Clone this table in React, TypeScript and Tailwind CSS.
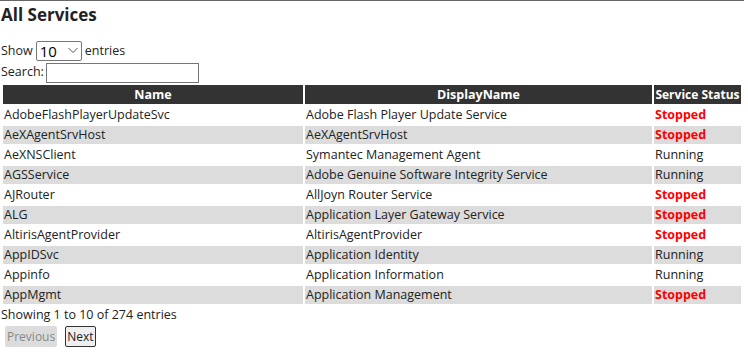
export default function App() {
  const rows = [
    ["AdobeFlashPlayerUpdateSvc", "Adobe Flash Player Update Service", "Stopped"],
    ["AeXAgentSrvHost", "AeXAgentSrvHost", "Stopped"],
    ["AeXNSClient", "Symantec Management Agent", "Running"],
    ["AGSService", "Adobe Genuine Software Integrity Service", "Running"],
    ["AJRouter", "AllJoyn Router Service", "Stopped"],
    ["ALG", "Application Layer Gateway Service", "Stopped"],
    ["AltirisAgentProvider", "AltirisAgentProvider", "Stopped"],
    ["AppIDSvc", "Application Identity", "Running"],
    ["Appinfo", "Application Information", "Running"],
    ["AppMgmt", "Application Management", "Stopped"],
  ]

  return (
    <div
      className="min-h-screen bg-white text-[12.5px] text-[#222] border-t border-[#666] w-[744px]"
      style={{ fontFamily: "'Open Sans', sans-serif" }}
    >
      <h1 className="text-[17px] font-bold leading-[24px] pt-[2px] pl-[1px] text-[#222]">All Services</h1>

      <div className="mt-[14px] flex items-center h-[21px] pl-[1px]">
        Show
        <div className="relative mx-[3px]">
          <select className="appearance-none w-[46px] h-[20px] border border-[#767676] rounded-[2px] text-[15px] leading-[18px] pl-[3px] bg-white text-black">
            <option>10</option>
          </select>
          <svg
            className="absolute right-[4px] top-[6px] pointer-events-none"
            width="10"
            height="7"
            viewBox="0 0 10 7"
            fill="none"
            stroke="#555"
            strokeWidth="1"
          >
            <path d="M0.5 1 L5 5.5 L9.5 1" />
          </svg>
        </div>
        entries
      </div>
      <div className="flex items-center h-[21px] pl-[1px]">
        Search:
        <input className="ml-[2px] w-[153px] h-[20px] border border-[#767676]" />
      </div>

      <table className="table-fixed border-separate border-spacing-[2px] w-[742px] ml-[1px]">
        <colgroup>
          <col className="w-[300px]" />
          <col className="w-[347px]" />
          <col />
        </colgroup>
        <thead>
          <tr className="bg-[#333] text-white font-bold">
            <th className="h-[19px] p-0 leading-[19px] whitespace-nowrap">Name</th>
            <th className="h-[19px] p-0 leading-[19px] whitespace-nowrap">DisplayName</th>
            <th className="h-[19px] p-0 leading-[19px] whitespace-nowrap text-[12px]">Service Status</th>
          </tr>
        </thead>
        <tbody>
          {rows.map((r, i) => (
            <tr key={r[0]} className={i % 2 === 1 ? "bg-[#dcdcdc]" : ""}>
              <td className="h-[18px] p-0 pl-[1px] leading-[18px] whitespace-nowrap">{r[0]}</td>
              <td className="h-[18px] p-0 pl-[1px] leading-[18px] whitespace-nowrap">{r[1]}</td>
              <td
                className={
                  r[2] === "Stopped"
                    ? "h-[18px] p-0 pl-[1px] leading-[18px] whitespace-nowrap font-bold text-[#ff0000]"
                    : "h-[18px] p-0 pl-[1px] leading-[18px] whitespace-nowrap"
                }
              >
                {r[2]}
              </td>
            </tr>
          ))}
        </tbody>
      </table>

      <div className="pl-[1px] leading-[18px]">Showing 1 to 10 of 274 entries</div>
      <div className="flex items-center gap-[8px] pl-[5px] mt-[2px]">
        <button className="h-[21px] px-[1px] rounded-[2px] bg-[#dcdcdc] text-[#888] border border-[#dcdcdc] text-[12px] leading-[18px]">
          Previous
        </button>
        <button className="h-[21px] px-[1px] rounded-[2px] bg-[#efefef] border border-[#333] text-[12px] leading-[18px]">
          Next
        </button>
      </div>
    </div>
  )
}
